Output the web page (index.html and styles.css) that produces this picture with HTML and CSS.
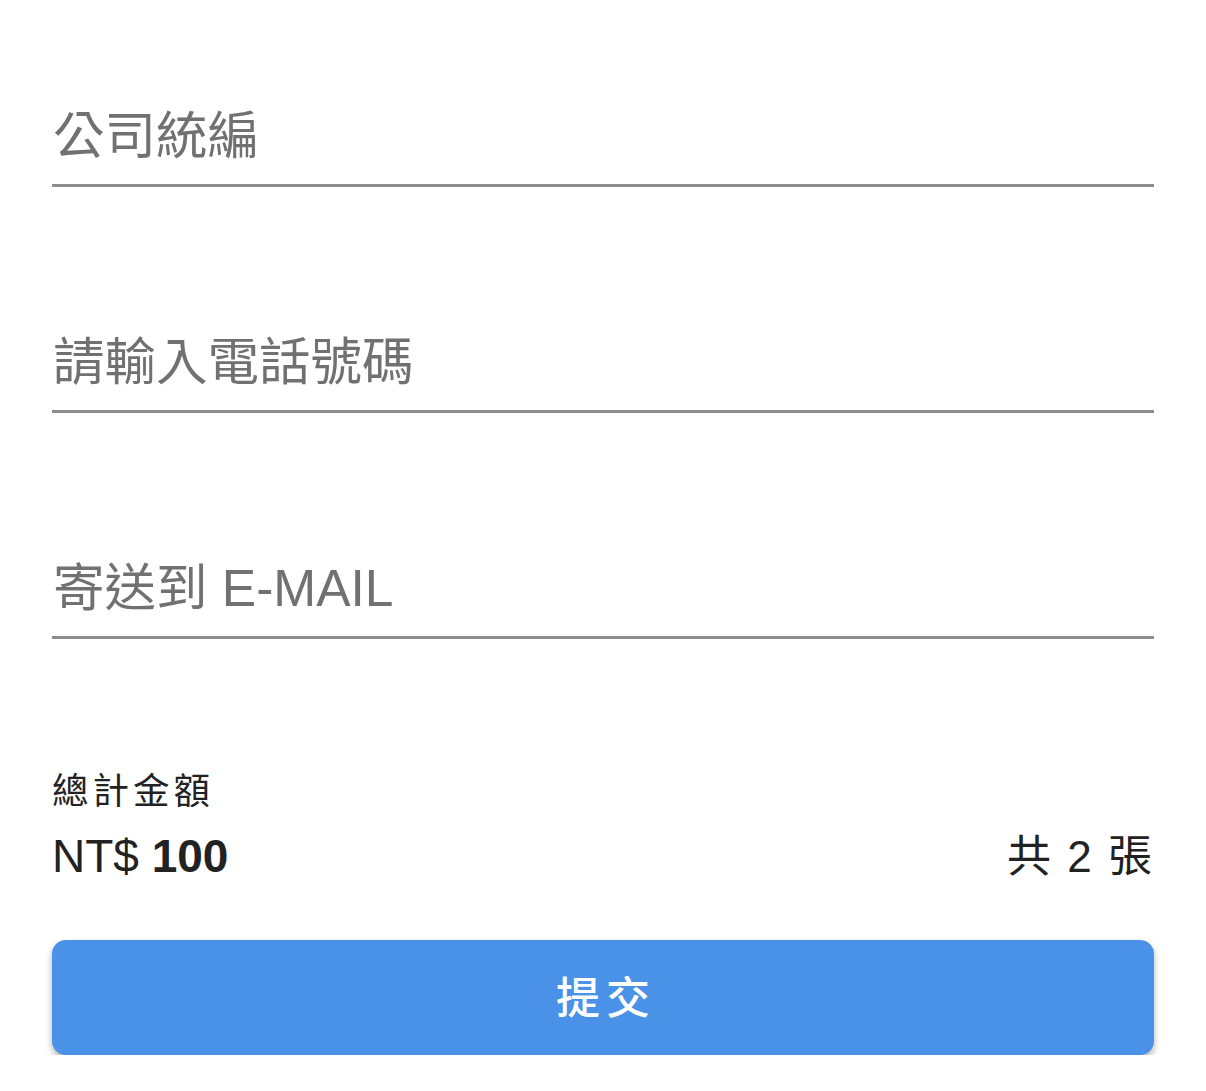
FILE: index.html
```html
<!DOCTYPE html>
<html lang="zh-Hant">
<head>
<meta charset="utf-8">
<title>發票資訊</title>
<link rel="stylesheet" href="styles.css">
</head>
<body>
<main class="sheet">
  <form class="form">
    <div class="field"><input class="input" type="text" placeholder="公司統編"></div>
    <div class="field"><input class="input" type="tel" placeholder="請輸入電話號碼"></div>
    <div class="field"><input class="input" type="email" placeholder="寄送到 E-MAIL"></div>

    <section class="summary">
      <div class="summary-label">總計金額</div>
      <div class="summary-row">
        <div class="price">NT$ <strong>100</strong></div>
        <div class="count">共 2 張</div>
      </div>
    </section>

    <button class="submit" type="button">提交</button>
  </form>
</main>
</body>
</html>
```

FILE: styles.css
```css
html, body {
  margin: 0;
  padding: 0;
  background: #ffffff;
}

body {
  font-family: "Liberation Sans", "Noto Sans CJK TC", sans-serif;
  color: #222222;
}

.sheet {
  padding: 82px 52px 0 52px;
}

.form {
  display: flex;
  flex-direction: column;
}

.field {
  margin-bottom: 121px;
}

.field:nth-child(3) {
  margin-bottom: 129px;
}

.input {
  display: block;
  box-sizing: border-box;
  width: 100%;
  height: 105px;
  padding: 6px 0 0 1px;
  margin: 0;
  border: none;
  border-bottom: 3px solid #8d8d8d;
  outline: none;
  background: transparent;
  font-family: "Liberation Sans", "Noto Sans CJK TC", sans-serif;
  font-size: 51.5px;
  color: #222;
}

.input::placeholder {
  color: #717171;
  opacity: 1;
}

.summary {
  display: flex;
  flex-direction: column;
  gap: 12px;
}

.summary-label {
  font-size: 36.5px;
  line-height: 48px;
  letter-spacing: 4px;
  color: #222;
}

.summary-row {
  display: flex;
  justify-content: space-between;
  align-items: baseline;
  line-height: 56px;
}

.price {
  font-size: 46px;
  color: #222;
}

.price strong {
  font-weight: 700;
}

.count {
  font-size: 44px;
  word-spacing: 4px;
  color: #222;
  padding-right: 2px;
}

.submit {
  margin-top: 55px;
  height: 115px;
  border: none;
  border-radius: 14px;
  background: #4a92e8;
  color: #ffffff;
  font-family: "Liberation Sans", "Noto Sans CJK TC", sans-serif;
  font-size: 44px;
  font-weight: 500;
  letter-spacing: 6px;
  padding: 0 0 6px 6px;
  box-shadow: 0 4px 7px rgba(0, 0, 0, 0.3);
}
```
